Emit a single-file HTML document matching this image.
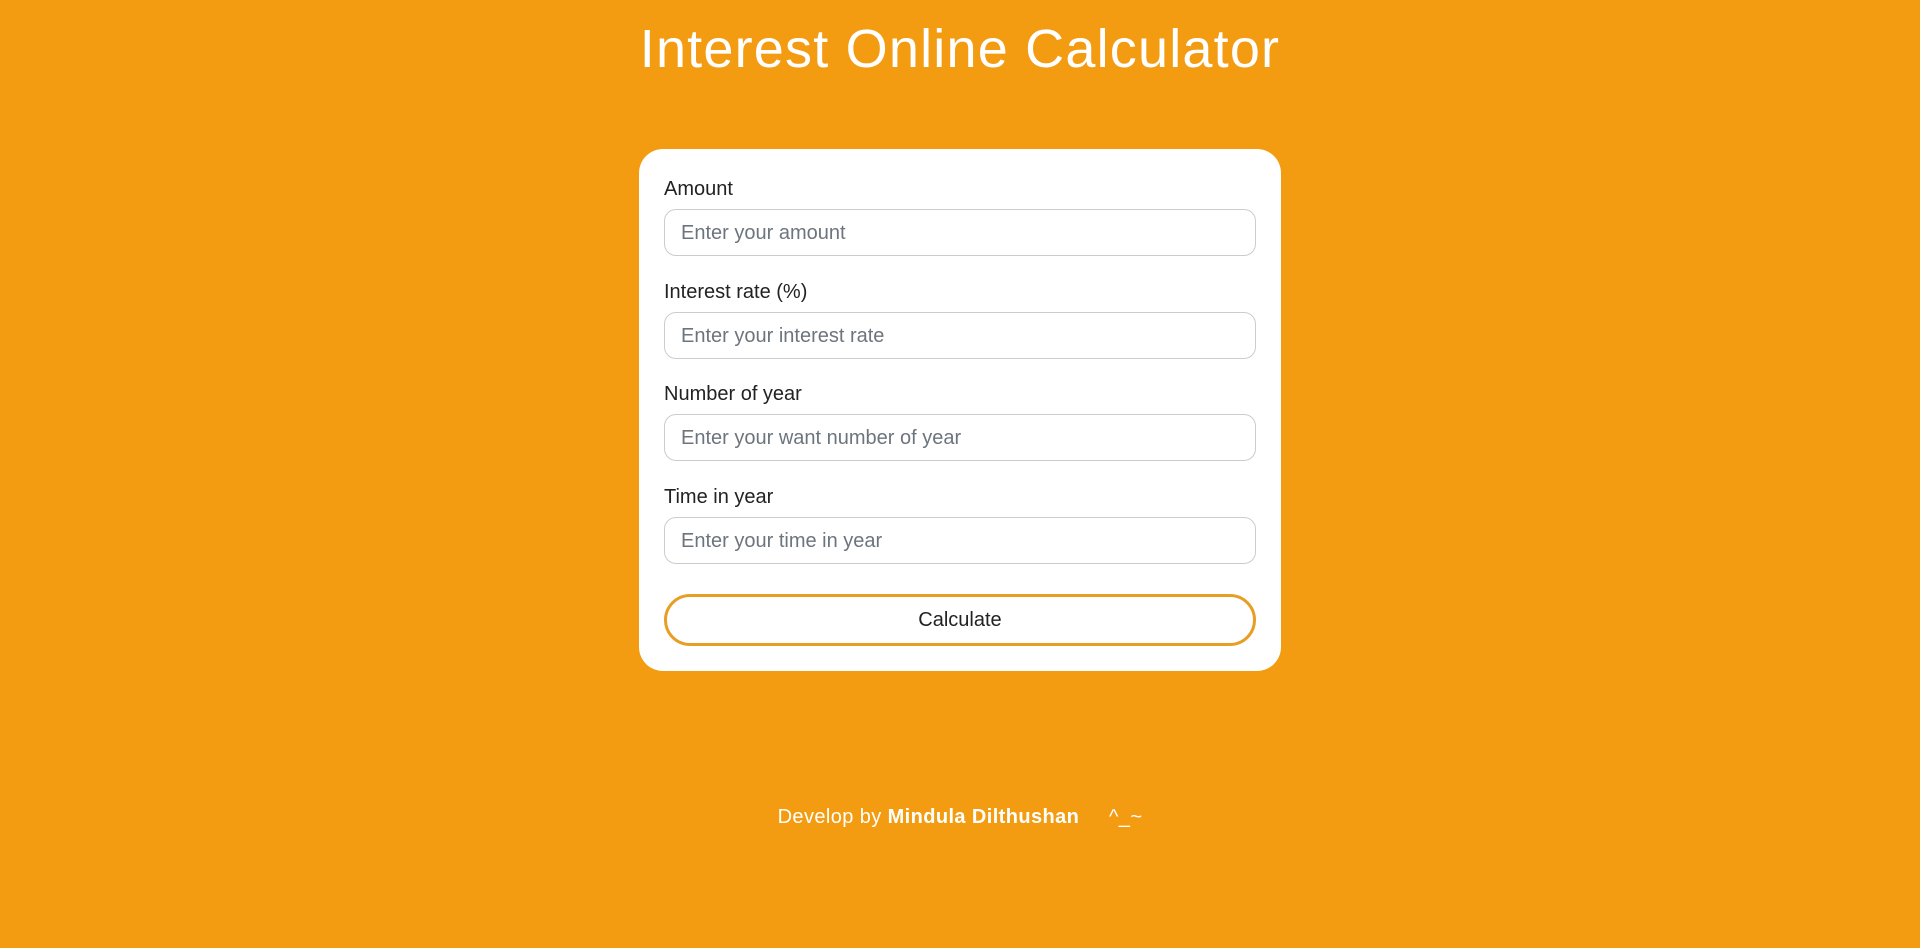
<!DOCTYPE html>
<html><head><meta charset="utf-8"><style>
html,body{margin:0;padding:0;}
body{width:1920px;height:948px;background:#f39c12;font-family:"Liberation Sans",sans-serif;position:relative;overflow:hidden;}
h1{position:absolute;top:18px;left:0;width:1920px;text-align:center;margin:0;color:#fff;font-weight:normal;font-size:54px;line-height:62px;letter-spacing:1.2px;}
.card{position:absolute;left:639px;top:149px;width:642px;height:522px;background:#fff;border-radius:24px;}
.lbl{position:absolute;left:25px;font-size:20px;color:#222;}
.inp{position:absolute;left:25px;width:590px;height:45px;border:1px solid #ccc;border-radius:12px;box-sizing:content-box;}
.inp span{position:absolute;left:16px;top:12px;font-size:20px;color:#6c757d;}
.btn{position:absolute;left:25px;top:445px;width:586px;height:46px;border:3px solid #e89d24;border-radius:26px;text-align:center;line-height:46px;font-size:20px;color:#222;}
.foot{position:absolute;top:806px;left:0;width:1920px;text-align:center;color:#fff;font-size:20px;letter-spacing:0.4px;}
</style></head><body>
<h1>Interest Online Calculator</h1>
<div class="card">
<div class="lbl" style="top:29px">Amount</div>
<div class="inp" style="top:60px"><span>Enter your amount</span></div>
<div class="lbl" style="top:132px">Interest rate (%)</div>
<div class="inp" style="top:163px"><span>Enter your interest rate</span></div>
<div class="lbl" style="top:234px">Number of year</div>
<div class="inp" style="top:265px"><span>Enter your want number of year</span></div>
<div class="lbl" style="top:337px">Time in year</div>
<div class="inp" style="top:368px"><span>Enter your time in year</span></div>
<div class="btn">Calculate</div>
</div>
<div class="foot">Develop by <b>Mindula Dilthushan</b> &nbsp;&nbsp;&nbsp; ^_~</div>
</body></html>
